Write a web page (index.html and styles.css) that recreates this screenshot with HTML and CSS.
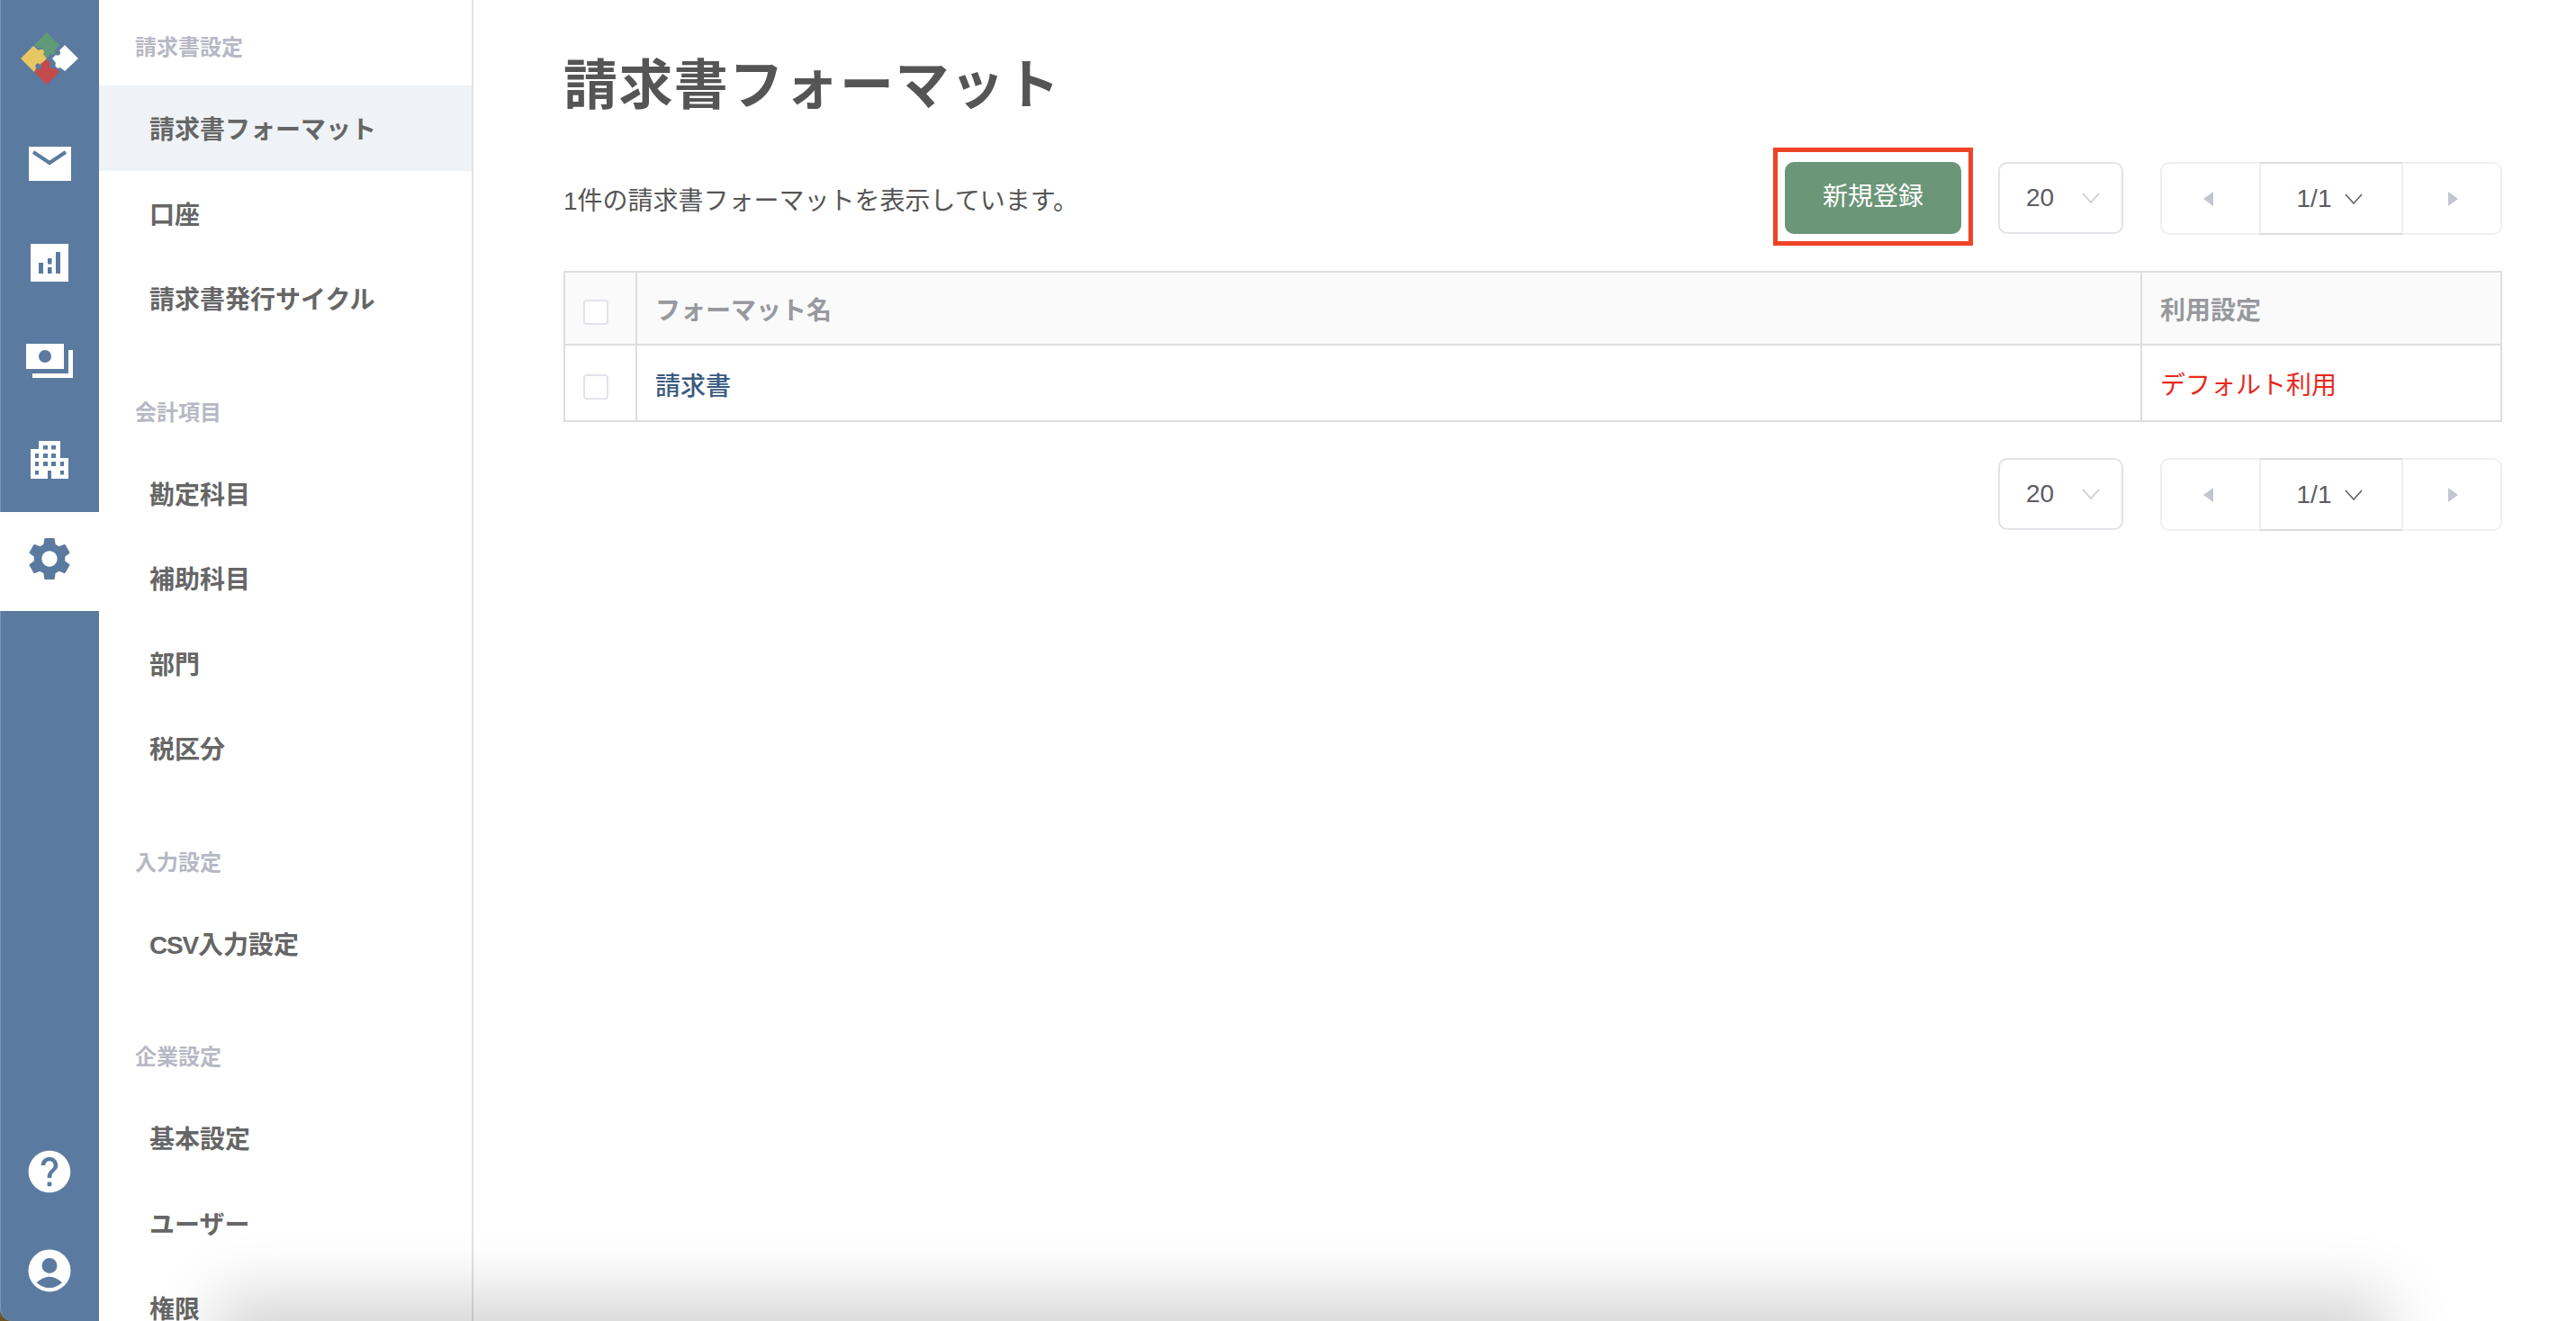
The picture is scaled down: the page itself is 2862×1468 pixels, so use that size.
FILE: index.html
```html
<!DOCTYPE html>
<html lang="ja">
<head>
	<meta charset="UTF-8">
	<title>請求書フォーマット</title>
	<link rel="stylesheet" href="styles.css">
</head>
<body>
<div class="app">
	<!-- icon rail -->
	<nav class="rail">
		<a href="#" class="rail-logo">
			<svg width="110" height="127" viewBox="0 0 110 127">
				<path fill="#5f9b78" d="M52 36L66 50 61 56C63 60 59 63 56 60L52 64 47 59C50 54 45 51 43 54L38 50Z"/>
				<path fill="#e8c662" d="M37 51L43 56C46 53 51 56 48 60L52 65 45 72C42 69 38 71 40 76L38 80 23 65Z"/>
				<path fill="#c44b4b" d="M52 66L56 70C53 75 58 78 61 75L66 80 52 94 38 80 42 76C45 79 48 75 45 71Z"/>
				<path fill="#fff" d="M72 50L87 65 72 79 67 75C64 77 60 74 62 70L58 65 62 61C65 63 69 60 66 56Z"/>
			</svg>
		</a>
		<a href="#" class="rail-item">
			<svg width="110" height="110" viewBox="0 0 110 110">
				<rect x="32" y="36" width="47" height="38" fill="#fff"/>
				<path d="M37 42L55 54 73 42" fill="none" stroke="#5a7aa0" stroke-width="4"/>
			</svg>
		</a>
		<a href="#" class="rail-item">
			<svg width="110" height="110" viewBox="0 0 110 110">
				<rect x="34" y="34" width="42" height="42" fill="#fff"/>
				<path fill="#5a7aa0" d="M43 55h5v12h-5zM53 50h4.500v6.500h-4.500zM53 60h4.500v7h-4.500zM62 43h5v24h-5z"/>
			</svg>
		</a>
		<a href="#" class="rail-item">
			<svg width="110" height="110" viewBox="0 0 110 110">
				<rect x="29" y="35" width="42" height="28" fill="#fff"/>
				<circle cx="50" cy="49" r="7" fill="#5a7aa0"/>
				<path fill="#fff" d="M76 42h5v31H36v-5h40z"/>
			</svg>
		</a>
		<a href="#" class="rail-item">
			<svg width="110" height="110" viewBox="0 0 110 110">
				<path fill="#fff" d="M43 33h24v19h9v23H34V42h9z"/>
				<path fill="#5a7aa0" d="M48 38h5v4.500h-5zM57 38h5v4.500h-5zM39 47h4v5h-4zM48 47h5v5h-5zM57 47h5v5h-5zM39 56h4v5h-4zM48 56h5v5h-5zM57 56h5v5h-5zM67 56h4v5h-4zM39 66h4v4.500h-4zM67 66h4v4.500h-4zM53 66h4v9h-4z"/>
			</svg>
		</a>
		<a href="#" class="rail-item on">
			<svg width="110" height="110" viewBox="0 0 110 110">
				<g transform="translate(26.200 23.200) scale(2.400)">
					<path fill="#5a7aa0" d="M19.140 12.940c.04-.3.06-.61.06-.94 0-.32-.02-.64-.07-.94l2.030-1.580c.18-.14.23-.41.12-.61l-1.920-3.320c-.12-.22-.37-.29-.59-.22l-2.390.96c-.5-.38-1.030-.7-1.620-.94l-.36-2.540c-.04-.24-.24-.41-.48-.41h-3.840c-.24 0-.43.17-.47.41l-.36 2.540c-.59.24-1.130.57-1.620.94l-2.390-.96c-.22-.08-.47 0-.59.22L2.740 8.870c-.12.21-.08.47.12.61l2.030 1.580c-.05.3-.09.63-.09.94s.02.64.07.94l-2.030 1.580c-.18.14-.23.41-.12.61l1.920 3.320c.12.22.37.29.59.22l2.390-.96c.5.38 1.030.7 1.620.94l.36 2.540c.05.24.24.41.48.41h3.840c.24 0 .44-.17.47-.41l.36-2.540c.59-.24 1.130-.56 1.620-.94l2.390.96c.22.08.47 0 .59-.22l1.920-3.320c.12-.22.07-.47-.12-.61l-2.010-1.580zM12 15.600c-1.980 0-3.600-1.620-3.600-3.600s1.620-3.600 3.600-3.600 3.600 1.620 3.600 3.600-1.620 3.600-3.600 3.600z"/>
				</g>
			</svg>
		</a>
		<div class="rail-bottom">
			<a href="#" class="rail-item">
				<svg width="110" height="110" viewBox="0 0 110 110">
					<g transform="translate(27 27) scale(2.330)">
						<path fill="#fff" d="M12 2C6.480 2 2 6.480 2 12s4.480 10 10 10 10-4.480 10-10S17.520 2 12 2zm1 17h-2v-2h2v2zm2.070-7.750l-.9.92C13.450 12.900 13 13.500 13 15h-2v-.5c0-1.100.45-2.100 1.170-2.830l1.240-1.260c.37-.36.59-.86.59-1.410 0-1.100-.9-2-2-2s-2 .9-2 2H8c0-2.210 1.790-4 4-4s4 1.790 4 4c0 .88-.36 1.680-.93 2.250z"/>
					</g>
				</svg>
			</a>
			<a href="#" class="rail-item">
				<svg width="110" height="110" viewBox="0 0 110 110">
					<g transform="translate(31 31)">
						<circle cx="24" cy="24" r="23.500" fill="#fff"/>
						<circle cx="24" cy="18.500" r="8.500" fill="#5a7aa0"/>
						<path fill="#5a7aa0" d="M9.600 37.500Q24 24 38 37.500 24 49 9.600 37.500z"/>
					</g>
				</svg>
			</a>
		</div>
	</nav>

	<!-- settings menu -->
	<aside class="side">
		<div class="side-group">
			<div class="side-label">請求書設定</div>
			<a href="#" class="side-item on">請求書フォーマット</a>
			<a href="#" class="side-item">口座</a>
			<a href="#" class="side-item">請求書発行サイクル</a>
		</div>
		<div class="side-group">
			<div class="side-label">会計項目</div>
			<a href="#" class="side-item">勘定科目</a>
			<a href="#" class="side-item">補助科目</a>
			<a href="#" class="side-item">部門</a>
			<a href="#" class="side-item">税区分</a>
		</div>
		<div class="side-group">
			<div class="side-label">入力設定</div>
			<a href="#" class="side-item"><span class="latin">CSV</span>入力設定</a>
		</div>
		<div class="side-group">
			<div class="side-label">企業設定</div>
			<a href="#" class="side-item">基本設定</a>
			<a href="#" class="side-item">ユーザー</a>
			<a href="#" class="side-item">権限</a>
		</div>
	</aside>

	<main class="main">
		<h1 class="title">請求書フォーマット</h1>
		<div class="toolbar">
			<p class="count">1件の請求書フォーマットを表示しています。</p>
			<div class="mark"><a href="#" class="btn-new">新規登録</a></div>
			<div class="select">20<svg class="chev" width="20" height="12" viewBox="0 0 20 12"><path d="M1 1l9 10 9-10"/></svg></div>
			<div class="pager">
				<a href="#" class="pager-btn prev"><i class="tri-left"></i></a>
				<div class="pager-page">1/1<svg class="chev dark" width="20" height="12" viewBox="0 0 20 12"><path d="M1 1l9 10 9-10"/></svg></div>
				<a href="#" class="pager-btn next"><i class="tri-right"></i></a>
			</div>
		</div>

		<table class="list">
			<thead>
				<tr>
					<th class="col-check"><span class="check"></span></th>
					<th>フォーマット名</th>
					<th class="col-use">利用設定</th>
				</tr>
			</thead>
			<tbody>
				<tr>
					<td class="col-check"><span class="check"></span></td>
					<td><a href="#" class="name">請求書</a></td>
					<td class="default">デフォルト利用</td>
				</tr>
			</tbody>
		</table>

		<div class="toolbar-bottom">
			<div class="select">20<svg class="chev" width="20" height="12" viewBox="0 0 20 12"><path d="M1 1l9 10 9-10"/></svg></div>
			<div class="pager">
				<a href="#" class="pager-btn prev"><i class="tri-left"></i></a>
				<div class="pager-page">1/1<svg class="chev dark" width="20" height="12" viewBox="0 0 20 12"><path d="M1 1l9 10 9-10"/></svg></div>
				<a href="#" class="pager-btn next"><i class="tri-right"></i></a>
			</div>
		</div>
	</main>

	<div class="edge-shadow"></div>
</div>
</body>
</html>
```

FILE: styles.css
```css
html,body{margin: 0;padding: 0;height: 100%;overflow: hidden;}
body{font-family: "Liberation Sans","Noto Sans CJK JP",sans-serif;color: #555;}
a{text-decoration: none;color: inherit;}

.app{position: relative;display: flex;height: 100vh;overflow: hidden;background-color: #6b5426;}

/* icon rail */
.rail{flex: none;display: flex;flex-direction: column;width: 110px;background-color: #5a7aa0;border-bottom-left-radius: 14px;box-shadow: inset 1px 0 0 #7f97b6;}
.rail-logo{display: block;height: 127px;}
.rail-logo svg,.rail-item svg{display: block;}
.rail-item{display: block;height: 110px;}
.rail-item.on{margin-top: 2px;background-color: #fff;}
.rail-bottom{margin-top: auto;padding-bottom: 1px;}

/* settings menu */
.side{flex: none;width: 414px;padding-top: 9px;background-color: #fff;border-right: 2px solid #e2e2e2;overflow: hidden;}
.side-group{margin-bottom: 36px;}
.side-label{height: 86px;line-height: 88px;padding-left: 40px;font-size: 24px;font-weight: 700;color: #b7b8c4;}
.side-item{display: block;height: 94.5px;line-height: 99px;padding-left: 56px;font-size: 28px;font-weight: 700;color: #666;}
.side-item.on{background-color: #eff3f7;}
.latin{letter-spacing: -1.2px;}

/* main */
.main{flex: 1;min-width: 0;padding: 48px 82px 0 100px;background-color: #fff;}
.title{margin: 0;height: 90px;line-height: 95px;font-size: 60px;font-weight: 700;color: #555;letter-spacing: 1.4px;}
.toolbar{display: flex;align-items: flex-start;margin-top: 26px;}
.count{flex: 1;margin: 0;padding-top: 40px;line-height: 40px;font-size: 28px;color: #555;}
.mark{padding: 11px 8px 8px;border: 5px solid #ee4426;}
.btn-new{display: block;width: 196px;height: 80px;line-height: 78px;text-align: center;font-size: 28px;color: #fff;background-color: #6b9778;border-radius: 10px;}

.select{display: flex;align-items: center;justify-content: space-between;box-sizing: border-box;width: 139px;height: 80px;margin: 16px 41px 0 28px;padding: 0 24px 0 29px;border: 2px solid #e2e2e9;border-radius: 10px;font-size: 28px;color: #5c5c62;}
.chev path{fill: none;stroke: #c6c8d0;stroke-width: 1.500;}
.chev.dark path{stroke: #5c5c62;}

.pager{display: flex;box-sizing: border-box;height: 81px;margin-top: 16px;border: 2px solid #eeeef4;border-radius: 10px;}
.pager-btn{display: flex;align-items: center;justify-content: center;box-sizing: border-box;width: 108px;}
.pager-btn.prev{padding-right: 5px;}
.pager-btn.next{padding-left: 3px;}
.pager-page{display: flex;align-items: center;justify-content: center;gap: 15px;box-sizing: border-box;width: 160px;margin: -2px 0;padding-right: 3px;border: 2px solid #eeeef4;border-top-color: #dcdce0;border-bottom-color: #dcdce0;font-size: 28px;color: #5c5c62;}
.tri-left,.tri-right{display: block;width: 0;height: 0;border-top: 8px solid transparent;border-bottom: 8px solid transparent;}
.tri-left{border-right: 11px solid #c3c6ce;}
.tri-right{border-left: 11px solid #c3c6ce;}

/* table */
.list{width: 100%;margin-top: 28px;table-layout: fixed;border-collapse: separate;border-spacing: 0;border-top: 2px solid #dedee0;border-left: 2px solid #dedee0;font-size: 28px;}
.list th,.list td{padding: 0 0 0 20px;border-right: 2px solid #dedee0;border-bottom: 2px solid #dedee0;text-align: left;}
.list th{height: 79px;background-color: #fafafa;font-weight: 700;color: #98999e;}
.list td{height: 83px;}
.list .col-check{width: 58px;}
.list .col-use{width: 378px;}
.check{display: block;box-sizing: border-box;width: 28px;height: 28px;margin-top: 9px;background-color: #fff;border: 2px solid #e2e3ea;border-radius: 4px;}
.name{position: relative;top: 1px;font-weight: 500;color: #3a5a80;}
.default{color: #e8281c;}

.toolbar-bottom{display: flex;justify-content: flex-end;margin-top: 24px;}

/* shadow of the window below */
.edge-shadow{position: absolute;left: 270px;right: 240px;bottom: -60px;height: 60px;box-shadow: 0 0 70px 30px rgba(0,0,0,.17);pointer-events: none;}
```
